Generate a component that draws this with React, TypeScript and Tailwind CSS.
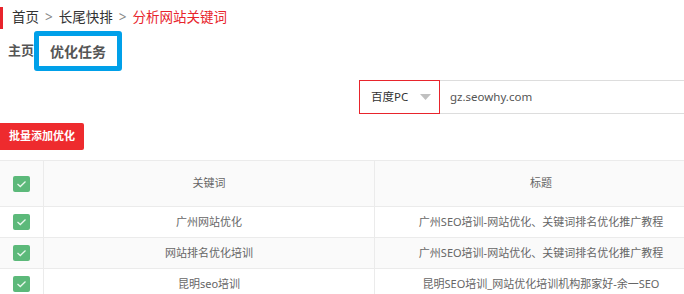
import React from "react";

const rows = [
  { k: "广州网站优化", t: "广州SEO培训-网站优化、关键词排名优化推广教程" },
  { k: "网站排名优化培训", t: "广州SEO培训-网站优化、关键词排名优化推广教程" },
  { k: "昆明seo培训", t: "昆明SEO培训_网站优化培训机构那家好-余一SEO" },
];

function Check() {
  return (
    <div className="w-[17px] h-[16px] rounded-[2px] bg-[#5cb97a] flex items-center justify-center ml-[13px]">
      <svg width="11" height="8" viewBox="0 0 11 8" fill="none">
        <path d="M1.5 4 L4.3 6.5 L9.5 1.5" stroke="#e8f7ec" strokeWidth="1.3" />
      </svg>
    </div>
  );
}

export default function App() {
  return (
    <div
      className="w-[684px] h-[294px] overflow-hidden bg-white"
      style={{ fontFamily: '"Noto Sans", "Noto Sans CJK SC", sans-serif' }}
    >
      <div className="pt-[7px]">
        <div className="h-[22px] border-l-[3px] border-[#e8242c] pl-[9px] flex items-center text-[13.5px] leading-none">
          <span className="text-[#333]">首页</span>
          <span className="text-[#888] mx-[6px]">&gt;</span>
          <span className="text-[#333]">长尾快排</span>
          <span className="text-[#888] mx-[6px]">&gt;</span>
          <span className="text-[#e8242c]">分析网站关键词</span>
        </div>
      </div>
      <div className="flex items-center mt-[2px] h-[40px]">
        <span className="pl-[8px] text-[13px] font-bold text-[#555]">主页</span>
        <div className="w-[88px] h-[40px] border-[5px] border-[#00a0e9] rounded-[3px] flex items-center justify-center text-[14px] font-bold text-[#555]">
          优化任务
        </div>
      </div>
      <div className="flex mt-[9px] pl-[359px] h-[34px]">
        <div className="w-[81px] h-[34px] border border-[#e8242c] flex items-center pl-[11px] pr-[8px] text-[11.5px] text-[#333]">
          <span className="flex-1">百度PC</span>
          <svg width="11" height="6" viewBox="0 0 11 6">
            <path d="M0 0 L11 0 L5.5 6 Z" fill="#c0c0c0" />
          </svg>
        </div>
        <div className="flex-1 h-[34px] border-y border-[#ddd] flex items-center pl-[10px] text-[11.5px] text-[#555]">
          gz.seowhy.com
        </div>
      </div>
      <div className="mt-[9px]">
        <button className="w-[84px] h-[27px] bg-[#ee2b2e] rounded-r-[2px] text-white text-[11px] font-bold flex items-center justify-center">
          批量添加优化
        </button>
      </div>
      <div className="mt-[10px] border-t border-[#ebebeb] text-[11px] text-[#666] w-[707px]">
        <div className="flex h-[46px] bg-[#fafafa] border-b border-[#ebebeb]">
          <div className="w-[44px] border-r border-[#ebebeb] flex items-center">
            <Check />
          </div>
          <div className="w-[331px] border-r border-[#ebebeb] flex items-center justify-center">关键词</div>
          <div className="flex-1 flex items-center justify-center">标题</div>
        </div>
        {rows.map((r, i) => (
          <div
            key={i}
            className={`flex h-[31px] border-b border-[#ebebeb] ${i === 1 ? "bg-[#fafafa]" : "bg-white"}`}
          >
            <div className="w-[44px] border-r border-[#ebebeb] flex items-center">
              <Check />
            </div>
            <div className="w-[331px] border-r border-[#ebebeb] flex items-center justify-center">{r.k}</div>
            <div className="flex-1 flex items-center justify-center">{r.t}</div>
          </div>
        ))}
      </div>
    </div>
  );
}
